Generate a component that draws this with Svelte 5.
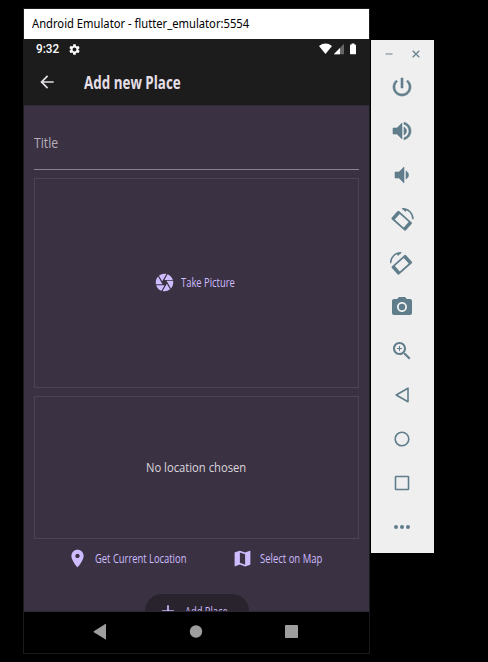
<script>
  const tools = [
    { name: 'power', d: 'M13 3h-2v10h2V3zm4.83 2.17-1.42 1.42C17.99 7.86 19 9.81 19 12c0 3.87-3.13 7-7 7s-7-3.13-7-7c0-2.19 1.01-4.14 2.58-5.42L6.17 5.17C4.23 6.82 3 9.26 3 12c0 4.97 4.03 9 9 9s9-4.03 9-9c0-2.74-1.23-5.18-3.17-6.83z', bold: true },
    { name: 'volume up', d: 'M3 9v6h4l5 5V4L7 9H3zm13.5 3c0-1.77-1.02-3.29-2.5-4.03v8.05c1.48-.73 2.5-2.25 2.5-4.02zM14 3.23v2.06c2.89.86 5 3.54 5 6.71s-2.11 5.85-5 6.71v2.06c4.01-.91 7-4.49 7-8.77s-2.99-7.86-7-8.77z', bold: true },
    { name: 'volume down', d: 'M18.5 12c0-1.77-1.02-3.29-2.5-4.03v8.05c1.48-.73 2.5-2.25 2.5-4.02zM5 9v6h4l5 5V4L9 9H5z', bold: true },
    { name: 'rotate left', rotate: 1 },
    { name: 'rotate right', rotate: -1 },
    { name: 'camera', d: 'M12 8.8a3.2 3.2 0 1 0 0 6.4 3.2 3.2 0 0 0 0-6.4zM9 2 7.17 4H4c-1.1 0-2 .9-2 2v12c0 1.1.9 2 2 2h16c1.1 0 2-.9 2-2V6c0-1.1-.9-2-2-2h-3.17L15 2H9zm3 15c-2.76 0-5-2.24-5-5s2.24-5 5-5 5 2.24 5 5-2.24 5-5 5z' },
    { name: 'zoom', d: 'M15.5 14h-.79l-.28-.27C15.41 12.59 16 11.11 16 9.5 16 5.91 13.09 3 9.5 3S3 5.91 3 9.5 5.91 16 9.5 16c1.61 0 3.09-.59 4.23-1.57l.27.28v.79l5 4.99L20.49 19l-4.99-5zm-6 0C7.01 14 5 11.99 5 9.5S7.01 5 9.5 5 14 7.01 14 9.5 11.99 14 9.5 14zm2.5-4h-2v2H9v-2H7V9h2V7h1v2h2v1z' },
    { name: 'back', line: 'M18 5.2v13.6L6.2 12z' },
    { name: 'home', line: 'M12 5.2a6.8 6.8 0 1 0 0 13.6a6.8 6.8 0 0 0 0-13.6z' },
    { name: 'overview', line: 'M6 5.5h12q.5 0 .5.5v12q0 .5-.5.5H6q-.5 0-.5-.5V6q0-.5.5-.5z' },
    { name: 'more', d: 'M6 10a2 2 0 1 0 0 4 2 2 0 0 0 0-4zm6 0a2 2 0 1 0 0 4 2 2 0 0 0 0-4zm6 0a2 2 0 1 0 0 4 2 2 0 0 0 0-4z' }
  ];

  const shutter = 'M9.4 10.5l4.77-8.26C13.47 2.09 12.75 2 12 2c-2.4 0-4.6.85-6.32 2.25l3.66 6.35.06-.1zM21.54 9c-.92-2.92-3.15-5.26-6-6.34L11.88 9h9.66zm.26 1h-7.49l.29.5 4.76 8.25C21 16.97 22 14.61 22 12c0-.69-.07-1.35-.2-2zM8.54 12l-3.9-6.75C3.01 7.03 2 9.39 2 12c0 .69.07 1.35.2 2h7.49l-1.15-2zm-6.08 3c.92 2.92 3.15 5.26 6 6.34L12.12 15H2.46zm11.27 0l-3.9 6.76c.7.15 1.42.24 2.17.24 2.4 0 4.6-.85 6.32-2.25l-3.66-6.35-.93 1.6z';
  const pin = 'M12 2C8.13 2 5 5.13 5 9c0 5.25 7 13 7 13s7-7.75 7-13c0-3.87-3.13-7-7-7zm0 9.5c-1.38 0-2.5-1.12-2.5-2.5s1.12-2.5 2.5-2.5 2.5 1.12 2.5 2.5-1.12 2.5-2.5 2.5z';
  const map = 'M20.5 3l-.16.03L15 5.1 9 3 3.36 4.9c-.21.07-.36.25-.36.48V20.5c0 .28.22.5.5.5l.16-.03L9 18.9l6 2.1 5.64-1.9c.21-.07.36-.25.36-.48V3.5c0-.28-.22-.5-.5-.5zM15 19l-6-2.11V5l6 2.11V19z';
  const plus = 'M19 13h-6v6h-2v-6H5v-2h6V5h2v6h6v2z';
  const arrow = 'M20 11H7.83l5.59-5.59L12 4l-8 8 8 8 1.41-1.41L7.83 13H20v-2z';
  const gear = 'M19.14 12.94c.04-.3.06-.61.06-.94 0-.32-.02-.64-.07-.94l2.03-1.58c.18-.14.23-.41.12-.61l-1.92-3.32c-.12-.22-.37-.29-.59-.22l-2.39.96c-.5-.38-1.03-.7-1.62-.94l-.36-2.54c-.04-.24-.24-.41-.48-.41h-3.84c-.24 0-.43.17-.47.41l-.36 2.54c-.59.24-1.13.57-1.62.94l-2.39-.96c-.22-.08-.47 0-.59.22L2.74 8.87c-.12.21-.08.47.12.61l2.03 1.58c-.05.3-.09.63-.09.94s.02.64.07.94l-2.03 1.58c-.18.14-.23.41-.12.61l1.92 3.32c.12.22.37.29.59.22l2.39-.96c.5.38 1.03.7 1.62.94l.36 2.54c.05.24.24.41.48.41h3.84c.24 0 .44-.17.47-.41l.36-2.54c.59-.24 1.13-.56 1.62-.94l2.39.96c.22.08.47 0 .59-.22l1.92-3.32c.12-.22.07-.47-.12-.61l-2.01-1.58zM12 15.6c-1.98 0-3.6-1.62-3.6-3.6s1.62-3.6 3.6-3.6 3.6 1.62 3.6 3.6-1.62 3.6-3.6 3.6z';

  // Condenses a label horizontally so that it fills the given width.
  function fit(node, width) {
    node.parentElement.style.width = `${width}px`;
    node.style.transform = `scaleX(${width / node.offsetWidth})`;
  }
</script>

{#snippet label(text, width)}
  <span class="fit"><span class="glyphs" use:fit={width}>{text}</span></span>
{/snippet}

{#snippet icon(d, size)}
  <svg width={size} height={size} viewBox="0 0 24 24" fill="currentColor"><path {d} /></svg>
{/snippet}

<div class="desktop">
  <div class="window">
    <div class="titlebar">{@render label('Android Emulator - flutter_emulator:5554', 217.5)}</div>
    <div class="status">
      <div class="clock">{@render label('9:32', 23.5)}</div>
      <div class="gear">{@render icon(gear, 13)}</div>
      <svg class="signals" width="38" height="12" viewBox="0 0 38 12">
        <path d="M0 2.9Q6.5-1.9 13 2.9L6.5 11z" fill="#fff" />
        <path d="M25 .8V11.2H14.8z" fill="#67676a" />
        <path d="M21 4.9v6.3h-6.2z" fill="#fff" />
        <path d="M32.6.5h2.8v1h.7q.9 0 .9.9v8q0 .9-.9.9h-4.2q-.9 0-.9-.9v-8q0-.9.9-.9h.7z" fill="#fff" />
      </svg>
    </div>
    <header>
      {@render icon(arrow, 20)}
      <h1>{@render label('Add new Place', 97)}</h1>
    </header>
    <main>
      <div class="field">{@render label('Title', 24.5)}</div>
      <div class="box picture">
        {@render icon(shutter, 21)}
        {@render label('Take Picture', 54)}
      </div>
      <div class="box location">{@render label('No location chosen', 100.5)}</div>
      <div class="actions">
        <div class="action">{@render icon(pin, 21)}{@render label('Get Current Location', 91.5)}</div>
        <div class="action">{@render icon(map, 21)}{@render label('Select on Map', 62.5)}</div>
      </div>
      <div class="add">{@render icon(plus, 20)}{@render label('Add Place', 43)}</div>
    </main>
    <nav>
      <svg width="345" height="41" viewBox="0 1 345 41" fill="#9e9e9e">
        <path d="M82 13v15q0 .6-.7.3L69.8 21.2q-.6-.5 0-1L81.3 13q.7-.4.7 0z" />
        <circle cx="172" cy="20.5" r="6.2" />
        <rect x="261" y="14" width="13" height="13" rx=".8" />
      </svg>
    </nav>
  </div>

  <aside>
    <div class="controls">
      <svg width="63" height="25" viewBox="0 0 63 25" fill="none" stroke-width="1.6">
        <path d="M14.5 14h7" stroke="#9aabb3" />
        <path d="M41.7 10.7l6.6 6.6m0-6.600l-6.6 6.6" stroke="#6c8692" stroke-width="1.4" />
      </svg>
    </div>
    {#each tools as tool (tool.name)}
      <div class="tool">
        <svg width="24" height="24" viewBox="0 0 24 24">
          {#if tool.rotate}
            <g transform={tool.rotate < 0 ? 'translate(23.5 0) scale(-1 1)' : null}>
              <path
                transform="translate(11.7 13.8) rotate(42)"
                fill-rule="evenodd"
                fill="currentColor"
                d="M-8.2-5.500H8.2Q9.500-5.500 9.500-4.200V4.200Q9.500 5.500 8.200 5.500H-8.200Q-9.500 5.500-9.500 4.200V-4.200Q-9.500-5.500-8.200-5.500zM-6-3.700V3.700H6V-3.700z"
              />
              <path d="M12.5 1.8C18.5 1.8 22.8 6 23 12.2" fill="none" stroke="currentColor" stroke-width="1.5" />
              <path d="M11.5 1.1L17 2.300L15.500 5z" fill="currentColor" />
            </g>
          {:else if tool.line}
            <path d={tool.line} fill="none" stroke="currentColor" stroke-width="1.6" stroke-linejoin="round" />
          {:else}
            <path d={tool.d} fill="currentColor" stroke="currentColor" stroke-width={tool.bold ? 0.6 : 0} />
          {/if}
        </svg>
      </div>
    {/each}
  </aside>
</div>

<style>
  :global(body) {
    background: #000;
  }
  .desktop {
    box-sizing: border-box;
    width: 488px;
    height: 662px;
    padding: 8px 0 0 23px;
    display: flex;
    align-items: flex-start;
    gap: 1px;
    overflow: hidden;
    background: #000;
    font-family: 'Open Sans', 'Noto Sans', sans-serif;
  }
  svg {
    display: block;
    flex: none;
  }
  .fit {
    display: block;
    flex: none;
    white-space: nowrap;
  }
  .glyphs {
    display: inline-block;
    transform-origin: 0 50%;
  }
  .window {
    box-sizing: border-box;
    width: 347px;
    height: 646px;
    border: 1px solid #1b1b1d;
    display: flex;
    flex-direction: column;
  }
  .titlebar {
    height: 30px;
    padding-left: 8px;
    line-height: 30px;
    background: #fff;
    color: #000;
    font-family: 'Noto Sans', sans-serif;
    font-size: 12px;
  }
  .status {
    height: 20px;
    padding: 0 12px 0 11.5px;
    display: flex;
    align-items: center;
    background: #1c1c1c;
    color: #fff;
    font: 500 12px/20px Roboto, sans-serif;
  }
  .gear {
    margin-left: 8.5px;
  }
  .signals {
    margin-left: auto;
  }
  header {
    height: 46px;
    padding-left: 13px;
    display: flex;
    align-items: center;
    gap: 27px;
    background: #1c1c1c;
    color: #e4dfe6;
  }
  h1 {
    margin: 0;
    font-size: 18.5px;
    font-weight: 700;
    line-height: 30px;
  }
  main {
    box-sizing: border-box;
    height: 507px;
    padding: 0 10px;
    border-top: 1px solid #302a36;
    border-bottom: 1px solid #2c2632;
    overflow: hidden;
    background: #3a3242;
    color: #cfbcff;
    font-size: 12px;
    font-weight: 500;
  }
  .field {
    box-sizing: border-box;
    height: 64px;
    padding-top: 27px;
    border-bottom: 1px solid #89828e;
    color: #b5aeb9;
    font-size: 14px;
    line-height: 20px;
  }
  .box {
    box-sizing: border-box;
    border: 1px solid #4b4459;
    display: flex;
    align-items: center;
    justify-content: center;
  }
  .picture {
    height: 210px;
    margin-top: 8px;
    gap: 6px;
    padding: 0 5px 2px 0;
  }
  .location {
    height: 143px;
    margin-top: 7.5px;
    padding-bottom: 1px;
    color: #dcd6df;
    font-size: 13.5px;
  }
  .actions {
    height: 39px;
    display: flex;
    align-items: center;
    padding-left: 33px;
    gap: 46px;
  }
  .action {
    display: flex;
    align-items: center;
    gap: 6.5px;
  }
  .add {
    box-sizing: border-box;
    width: 104px;
    height: 34px;
    margin: 16.5px 0 0 110.5px;
    padding-left: 13.5px;
    display: flex;
    align-items: center;
    gap: 6.5px;
    border-radius: 17px;
    background: #29232d;
  }
  nav {
    height: 41px;
    background: #000;
  }
  aside {
    width: 63px;
    height: 513px;
    margin-top: 32px;
    background: #efefef;
    color: #607d8b;
  }
  .controls {
    height: 25px;
  }
  .tool {
    height: 44px;
    padding-right: 1px;
    display: flex;
    align-items: center;
    justify-content: center;
  }
</style>
